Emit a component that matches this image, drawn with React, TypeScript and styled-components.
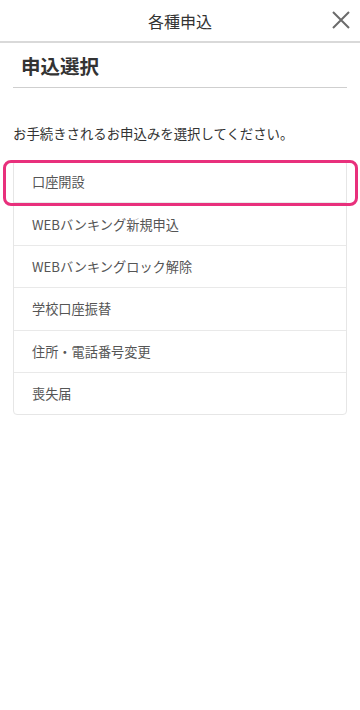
import React from 'react';
import styled, { createGlobalStyle } from 'styled-components';

const GlobalStyle = createGlobalStyle`
  html, body {
    margin: 0;
    padding: 0;
    background: #fff;
  }
  body {
    font-family: "Noto Sans CJK JP", "Noto Sans", sans-serif;
    color: #333;
  }
`;

const Page = styled.div`
  width: 360px;
  min-height: 710px;
  background: #fff;
`;

const Header = styled.header`
  position: relative;
  height: 41px;
  display: flex;
  align-items: center;
  justify-content: center;
  border-bottom: 2px solid #d9d9d9;
`;

const Title = styled.h1`
  margin: 0;
  font-size: 16px;
  font-weight: 400;
  color: #333;
  line-height: 1;
`;

const CloseButton = styled.button`
  position: absolute;
  right: 6px;
  top: 7px;
  width: 26px;
  height: 26px;
  padding: 0;
  border: none;
  background: none;
  display: flex;
  align-items: center;
  justify-content: center;
  cursor: pointer;
`;

const Section = styled.section`
  padding: 0 13px;
`;

const Heading = styled.h2`
  margin: 0;
  padding: 0 0 0 8px;
  height: 44px;
  display: flex;
  align-items: center;
  font-size: 19.5px;
  font-weight: 700;
  color: #333;
  border-bottom: 1px solid #cfcfcf;
`;

const Lead = styled.p`
  margin: 0;
  padding: 35px 0 0;
  font-size: 13.4px;
  line-height: 20px;
  color: #333;
`;

const ListWrap = styled.div`
  position: relative;
  margin-top: 17px;
`;

const List = styled.ul`
  margin: 0;
  padding: 0;
  list-style: none;
  border: 1px solid #e6e6e6;
  border-radius: 4px;
`;

const Item = styled.li`
  height: 41.4px;
  display: flex;
  align-items: center;
  padding-left: 18px;
  font-size: 13.2px;
  color: #555;
  border-bottom: 1px solid #e9e9e9;

  &:last-child {
    border-bottom: none;
  }
`;

const Highlight = styled.div`
  position: absolute;
  left: -10px;
  right: -11px;
  top: 0;
  height: 40px;
  border: 3px solid #e8307c;
  border-radius: 8px;
  pointer-events: none;
`;

const items = [
  '口座開設',
  'WEBバンキング新規申込',
  'WEBバンキングロック解除',
  '学校口座振替',
  '住所・電話番号変更',
  '喪失届',
];

const App = () => {
  return (
    <Page>
      <GlobalStyle />
      <Header>
        <Title>各種申込</Title>
        <CloseButton aria-label="閉じる">
          <svg width="20" height="20" viewBox="0 0 20 20">
            <path d="M2 2 L18 18 M18 2 L2 18" stroke="#6b6b6b" strokeWidth="2" fill="none" />
          </svg>
        </CloseButton>
      </Header>
      <Section>
        <Heading>申込選択</Heading>
        <Lead>お手続きされるお申込みを選択してください。</Lead>
        <ListWrap>
          <List>
            {items.map((label) => (
              <Item key={label}>{label}</Item>
            ))}
          </List>
          <Highlight />
        </ListWrap>
      </Section>
    </Page>
  );
};

export default App;
